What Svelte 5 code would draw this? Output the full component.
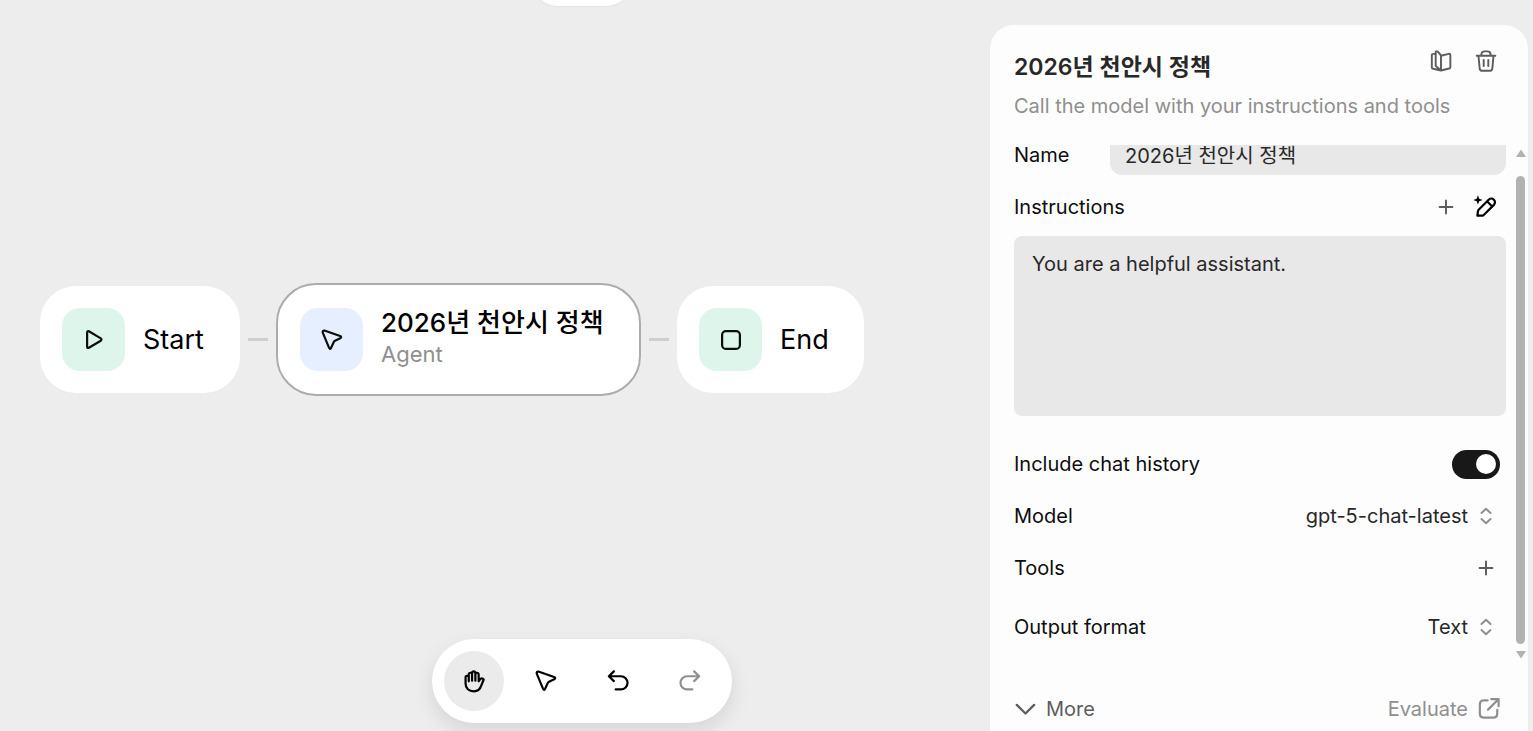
<script>
  let name = $state('2026년 천안시 정책');
  let instructions = $state('You are a helpful assistant.');
  let history = $state(true);
  let model = $state('gpt-5-chat-latest');
  let format = $state('Text');
  let tool = $state('pan');
</script>

{#snippet cursor()}
  <svg class="icon" viewBox="0 0 24 24" aria-hidden="true">
    <path d="M3.700 1.700 20.800 7.700q2.300 1 .2 2.300l-5.700 2.900q-1 .5-1.500 1.500l-2.800 6.200q-1.300 2.200-2.300-.2L1.900 3.900q-.3-2.400 1.800-2.200Z" />
  </svg>
{/snippet}

{#snippet plus()}
  <svg class="icon thin" viewBox="0 0 24 24" aria-hidden="true"><path d="M12 5v14M5 12h14" /></svg>
{/snippet}

{#snippet updown()}
  <svg class="updown" viewBox="0 0 12 18" aria-hidden="true"><path d="M1.500 6 6 1.800 10.500 6M1.500 12 6 16.200 10.500 12" /></svg>
{/snippet}

<div class="page">
  <main class="canvas">
    <div class="tab"></div>

    <div class="flow">
      <div class="node">
        <span class="tile green">
          <svg class="icon" viewBox="0 0 24 24" aria-hidden="true"><path d="M4.500 3.500v16q.2 1.800 1.900 1L19.400 12.800q1.600-1.300 0-2.600L6.400 2.500Q4.700 1.700 4.500 3.500Z" /></svg>
        </span>
        <span class="label">Start</span>
      </div>
      <span class="link"></span>
      <div class="node selected">
        <span class="tile blue">{@render cursor()}</span>
        <div class="text">
          <span class="label">{name}</span>
          <span class="kind">Agent</span>
        </div>
      </div>
      <span class="link"></span>
      <div class="node end">
        <span class="tile green">
          <svg class="icon" viewBox="0 0 24 24" aria-hidden="true"><rect x="2.300" y="2.300" width="19.400" height="19.400" rx="4" /></svg>
        </span>
        <span class="label">End</span>
      </div>
    </div>

    <div class="toolbar">
      <button aria-label="Pan" class:active={tool === 'pan'} onclick={() => (tool = 'pan')}>
        <svg class="icon" viewBox="0 0 24 24" aria-hidden="true">
          <path d="M2.800 14.800V8a1.700 1.700 0 0 1 3.500 0V4.800a1.800 1.800 0 0 1 3.600 0V3.300a1.800 1.800 0 0 1 3.600 0V4.800a1.800 1.800 0 0 1 3.600 0v7.500l1.700-2.400q2.200-1.600 3.800.5L20 16.800C18.600 21.300 16.100 23.300 11.800 23.300 6.300 23.300 2.800 20 2.800 14.800ZM6.300 7.800v4.500M9.900 4.800v6.800M13.500 4.800v6.800" />
        </svg>
      </button>
      <button aria-label="Select" class:active={tool === 'select'} onclick={() => (tool = 'select')}>{@render cursor()}</button>
      <button aria-label="Undo">
        <svg class="icon" viewBox="0 0 24 24" aria-hidden="true"><path d="M7.500 1.500 2 6.800l5.500 5.300M2.500 6.800h12.700a7.200 7.200 0 0 1 0 14.400h-5.700" /></svg>
      </button>
      <button aria-label="Redo" disabled>
        <svg class="icon" viewBox="0 0 24 24" aria-hidden="true"><path d="M16.500 1.500 22 6.800l-5.500 5.300M21.500 6.800H8.800a7.200 7.200 0 0 0 0 14.400h5.700" /></svg>
      </button>
    </div>
  </main>

  <aside class="panel">
    <header>
      <div class="heading">
        <h2>{name}</h2>
        <div class="actions">
          <button aria-label="Documentation">
            <svg class="icon thin" viewBox="0 0 24 24" aria-hidden="true">
              <path d="M12 6.300 20.500 4.200q1.700-.2 1.700 1.300v13.200q0 1.200-1.200 1.500L12 22.300 3.400 20.500Q2 20.200 2 19V5.500q0-1.200 1.500-1.300L5.500 4M12 22.300V6.800q0-1-.7-1.800L8.500 1.800Q6.200.8 6.200 3v13.500q0 1 .7 1.600L12 22.300" />
            </svg>
          </button>
          <button aria-label="Delete">
            <svg class="icon thin" viewBox="0 0 24 24" aria-hidden="true">
              <path d="M1.800 6.300h20.400M7 6V5q0-3.500 3.500-3.500h3Q17 1.500 17 5v1M3.800 6.500l1.300 13.700q.3 2.500 2.900 2.500h8q2.600 0 2.900-2.500l1.300-13.700M9.500 11v6.500M14.500 11v6.500" />
            </svg>
          </button>
        </div>
      </div>
      <p>Call the model with your instructions and tools</p>
    </header>

    <div class="scroll">
      <div class="form">
        <div class="row">
          <label for="name">Name</label>
          <input id="name" class="name" type="text" bind:value={name} />
        </div>
        <div class="row">
          <label for="instructions">Instructions</label>
          <div class="tools">
            <button aria-label="Add variable">{@render plus()}</button>
            <button class="dark" aria-label="Improve instructions">
              <svg class="icon" viewBox="0 0 24 24" aria-hidden="true">
                <path d="M2.600 21.500 3.300 16.300q.1-.8.7-1.400L14.900 4a4 4 0 0 1 5.700 5.700L9.500 20.700q-.6.600-1.400.7ZM13.300 6l5.500 5.500" />
                <path class="spark" d="M3.200-.8 4.600 2.900 8.300 4.300 4.600 5.700 3.200 9.400 1.800 5.700-1.900 4.300 1.800 2.900Z" />
              </svg>
            </button>
          </div>
        </div>
        <textarea id="instructions" bind:value={instructions}></textarea>
        <div class="row">
          <label for="history">Include chat history</label>
          <input id="history" class="switch" type="checkbox" bind:checked={history} />
        </div>
        <div class="row">
          <label for="model">Model</label>
          <div class="pick">
            <select id="model" bind:value={model}><option>gpt-5-chat-latest</option></select>
            {@render updown()}
          </div>
        </div>
        <div class="row">
          <span>Tools</span>
          <div class="tools"><button aria-label="Add tool">{@render plus()}</button></div>
        </div>
        <div class="row last">
          <label for="format">Output format</label>
          <div class="pick">
            <select id="format" bind:value={format}><option>Text</option></select>
            {@render updown()}
          </div>
        </div>
      </div>
      <div class="bar" aria-hidden="true">
        <svg viewBox="0 0 10 8"><path d="M5 .5 10 8H0Z" /></svg>
        <span class="thumb"></span>
        <svg viewBox="0 0 10 8"><path d="M5 7.500 0 0h10Z" /></svg>
      </div>
    </div>

    <footer>
      <button class="more">
        <svg class="icon" viewBox="0 0 24 24" aria-hidden="true"><path d="m3 7.500 9.500 9.500L22 7.500" /></svg>
        More
      </button>
      <button class="evaluate">
        Evaluate
        <svg class="icon" viewBox="0 0 24 24" aria-hidden="true"><path d="M10.500 2.500H6.500Q2 2.500 2 7v10Q2 21.500 6.500 21.500h10q4.500 0 4.500-4.500v-4M14.500 1.200h8V9M22 1.700 11 12.700" /></svg>
      </button>
    </footer>
  </aside>
</div>

<style>
  :global(body) {
    margin: 0;
    background: #ededed;
  }
  .page {
    display: flex;
    height: 100vh;
    overflow: hidden;
    box-sizing: border-box;
    padding-right: 5px;
    background: #ededed;
    color: #0d0d0d;
    font: 20px/28px Inter, "Noto Sans CJK KR", sans-serif;
  }
  .page *,
  .page *::before {
    box-sizing: border-box;
  }
  button,
  input,
  select,
  textarea {
    font: inherit;
    color: inherit;
    border: 0;
    margin: 0;
    padding: 0;
    background: none;
    outline: none;
  }
  button {
    display: flex;
    align-items: center;
    justify-content: center;
  }
  .icon {
    display: block;
    flex: none;
    width: 22px;
    height: 22px;
    overflow: visible;
    fill: none;
    stroke: currentColor;
    stroke-width: 2.4;
    stroke-linecap: round;
    stroke-linejoin: round;
  }
  .thin {
    stroke-width: 2.1;
  }

  .canvas {
    position: relative;
    flex: 1;
    min-width: 0;
  }
  .tab {
    position: absolute;
    top: -54px;
    left: 532px;
    width: 100px;
    height: 60px;
    border-radius: 26px;
    background: #fff;
    box-shadow: 0 1px 2px rgb(0 0 0 / 4%);
  }
  .flow {
    position: absolute;
    top: 283px;
    left: 40px;
    display: flex;
    align-items: center;
  }
  .node {
    display: flex;
    align-items: center;
    gap: 18px;
    min-width: 200px;
    height: 107px;
    padding: 0 22px;
    border-radius: 36px;
    background: #fff;
    white-space: nowrap;
  }
  .end {
    min-width: 187px;
  }
  .selected {
    min-width: 365px;
    height: 113px;
    border: 2px solid #acacac;
    border-radius: 40px;
  }
  .tile {
    display: flex;
    flex: none;
    align-items: center;
    justify-content: center;
    width: 63px;
    height: 63px;
    border-radius: 18px;
  }
  .green {
    background: #def5ec;
  }
  .blue {
    background: #e6efff;
  }
  .label {
    color: #000;
    font-size: 27px;
    line-height: 34px;
  }
  .text {
    display: flex;
    flex-direction: column;
    padding-bottom: 6px;
  }
  .text .label {
    font-size: 26px;
    font-weight: 500;
  }
  .kind {
    color: #8f8f8f;
    font-size: 22px;
    line-height: 28px;
  }
  .link {
    width: 20px;
    height: 3px;
    margin: 0 8px;
    background: #cecece;
  }
  .toolbar {
    position: absolute;
    bottom: 8px;
    left: 432px;
    display: flex;
    gap: 12px;
    padding: 12px;
    border-radius: 42px;
    background: #fff;
    color: #000;
    box-shadow: 0 8px 20px rgb(0 0 0 / 10%);
  }
  .toolbar button {
    width: 60px;
    height: 60px;
    border-radius: 50%;
  }
  .toolbar .active {
    background: #ebebeb;
  }
  .toolbar button:disabled {
    color: #909090;
  }

  .panel {
    display: flex;
    flex: none;
    flex-direction: column;
    width: 538px;
    height: 100vh;
    margin-top: 25px;
    border-radius: 24px;
    background: #fdfdfd;
  }
  header {
    height: 120px;
    padding: 24px 24px 0;
  }
  .heading {
    display: flex;
    justify-content: space-between;
  }
  h2 {
    margin: 0;
    color: #282828;
    font-size: 23px;
    font-weight: 600;
    line-height: 36px;
  }
  .actions {
    display: flex;
    gap: 21px;
    height: 24px;
    padding-right: 6px;
    color: #5d5d5d;
  }
  .actions button {
    width: 24px;
  }
  p {
    margin: 7px 0 0;
    color: #8f8f8f;
    white-space: nowrap;
  }
  .scroll {
    display: flex;
    height: 518px;
    overflow: hidden;
  }
  .form {
    display: flex;
    flex: 1;
    flex-direction: column;
    gap: 12px;
    margin-top: -10px;
    padding-left: 24px;
  }
  .row {
    display: flex;
    flex: none;
    align-items: center;
    justify-content: space-between;
    height: 40px;
    line-height: 20px;
  }
  .last {
    margin-top: 7px;
  }
  .name {
    width: 396px;
    height: 40px;
    padding: 0 15px 2px;
    border-radius: 12px;
    background: #e8e8e8;
    color: #282828;
  }
  .tools {
    display: flex;
    gap: 16px;
    padding-right: 8px;
    color: #5d5d5d;
  }
  .tools button {
    width: 24px;
    height: 24px;
  }
  .tools .dark {
    color: #000;
  }
  .dark .spark {
    fill: currentColor;
    stroke: none;
  }
  textarea {
    display: block;
    flex: none;
    height: 180px;
    margin: -3px 0 16px;
    padding: 14px 18px;
    border-radius: 8px;
    background: #e8e8e8;
    color: #282828;
    resize: none;
  }
  .switch {
    display: flex;
    align-items: center;
    justify-content: flex-end;
    appearance: none;
    width: 48px;
    height: 29px;
    margin-right: 6px;
    padding: 0 4px;
    border-radius: 15px;
    background: #bdbdbd;
  }
  .switch:checked {
    background: #181818;
  }
  .switch:not(:checked) {
    justify-content: flex-start;
  }
  .switch::before {
    content: "";
    width: 20px;
    height: 20px;
    border-radius: 50%;
    background: #fff;
  }
  .pick {
    display: grid;
    align-items: center;
    padding-right: 14px;
    color: #282828;
  }
  .pick > :global(*) {
    grid-area: 1 / 1;
  }
  select {
    appearance: none;
    height: 28px;
    padding-right: 24px;
    line-height: 28px;
    text-align-last: right;
  }
  .updown {
    justify-self: end;
    width: 12px;
    height: 18px;
    fill: none;
    stroke: #8f8f8f;
    stroke-width: 2;
    stroke-linecap: round;
    stroke-linejoin: round;
    pointer-events: none;
  }
  .bar {
    display: flex;
    flex-direction: column;
    align-items: center;
    width: 22px;
    padding: 4px 0 4px 7px;
    gap: 7px;
  }
  .bar svg {
    width: 10px;
    height: 8px;
    fill: #b2b2b2;
  }
  .bar svg:first-child {
    margin: 0 0 12px;
  }
  .thumb {
    flex: 1;
    width: 9px;
    border-radius: 5px;
    background: #b2b2b2;
  }
  footer {
    display: flex;
    align-items: center;
    justify-content: space-between;
    height: 92px;
    padding: 0 28px 0 24px;
  }
  footer button {
    gap: 10px;
  }
  .more {
    color: #5d5d5d;
  }
  .evaluate {
    color: #8f8f8f;
  }
</style>
